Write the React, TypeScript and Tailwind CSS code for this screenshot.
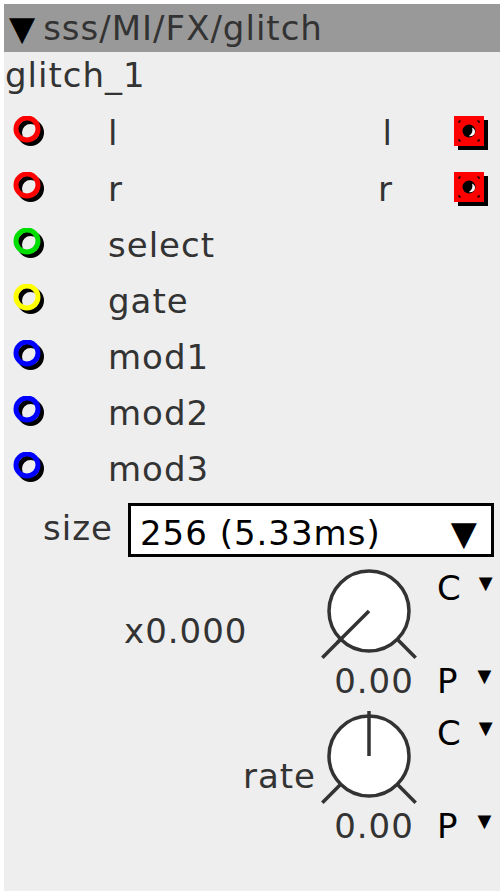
import React from 'react';

type Jack = { label: string; color: string; out?: string };

const inputs: Jack[] = [
  { label: 'l', color: '#ff0000', out: 'l' },
  { label: 'r', color: '#ff0000', out: 'r' },
  { label: 'select', color: '#00dd00' },
  { label: 'gate', color: '#ffff00' },
  { label: 'mod1', color: '#0000ff' },
  { label: 'mod2', color: '#0000ff' },
  { label: 'mod3', color: '#0000ff' },
];

const InJack = ({ color }: { color: string }) => (
  <svg width="34" height="34" viewBox="0 0 34 34">
    <circle cx="17.5" cy="16.5" r="11" fill="none" stroke="#000" strokeWidth="5" />
    <circle cx="14" cy="13" r="11" fill="none" stroke={color} strokeWidth="5" />
  </svg>
);

const OutJack = () => (
  <svg width="38" height="38" viewBox="0 0 38 38">
    <rect x="6" y="6" width="30" height="30" fill="#000" />
    <rect x="2" y="2" width="30" height="30" fill="#ff0000" />
    <circle cx="17" cy="17" r="6.5" fill="#000" />
    <path d="M20 13.5 A4.5 4.5 0 0 1 17 22 A7 7 0 0 0 20 13.5 Z" fill="#fff" />
    <path d="M7 9 V7 H9 M25 7 H27 V9 M7 25 V27 H9 M25 27 H27 V25" stroke="#000" strokeWidth="1.2" fill="none" />
  </svg>
);

const Knob = ({ angle }: { angle: number }) => {
  const rad = (a: number) => (a * Math.PI) / 180;
  const pt = (a: number, r: number) => [50 + r * Math.sin(rad(a)), 50 - r * Math.cos(rad(a))];
  const [t1x, t1y] = pt(-135, 40);
  const [t2x, t2y] = pt(-135, 66);
  const [t3x, t3y] = pt(135, 40);
  const [t4x, t4y] = pt(135, 66);
  const [ix, iy] = pt(angle, 45);
  return (
    <svg width="100" height="100" viewBox="0 0 100 100">
      <circle cx="50" cy="50" r="40" fill="#fff" stroke="#333" strokeWidth="3.5" />
      <line x1={t1x} y1={t1y} x2={t2x} y2={t2y} stroke="#333" strokeWidth="3.5" />
      <line x1={t3x} y1={t3y} x2={t4x} y2={t4y} stroke="#333" strokeWidth="3.5" />
      <line x1="50" y1="50" x2={ix} y2={iy} stroke="#333" strokeWidth="3.5" />
    </svg>
  );
};

const KnobRow = ({ label, labelPad, angle }: { label: string; labelPad: string; angle: number }) => (
  <div className="flex h-[140px]">
    <div className={`w-[314.5px] pt-[50px] text-right ${labelPad}`}>{label}</div>
    <div className="flex w-[100px] flex-col">
      <Knob angle={angle} />
      <div className="pl-[11px] text-center">0.00</div>
    </div>
    <div className="ml-[18.5px] flex flex-col justify-between pt-[7px] text-black">
      <div className="flex items-start">
        <span>C</span>
        <span className="ml-[17px] mt-[6px] text-[18px] leading-none">▼</span>
      </div>
      <div className="flex items-start">
        <span>P</span>
        <span className="ml-[19px] mt-[6px] text-[18px] leading-none">▼</span>
      </div>
    </div>
  </div>
);

export default function App() {
  return (
    <div className="min-h-screen bg-white pl-1 pt-1" style={{ fontFamily: '"DejaVu Sans", sans-serif' }}>
      <div className="h-[887px] w-[496px] bg-[#eeeeee] text-[34px] leading-[40px] tracking-[1px] text-[#333333]">
        <div className="flex h-[48px] items-center bg-[#999999] pl-[5px]">
          <span className="text-black">▼</span>
          <span className="ml-[7px]">sss/MI/FX/glitch</span>
        </div>
        <div className="h-[53px] pl-[1px] pt-[3px]">glitch_1</div>

        {inputs.map((j) => (
          <div key={j.label} className="flex h-[56px] items-center">
            <div className="ml-[9px]">
              <InJack color={j.color} />
            </div>
            <span className="ml-[61px]">{j.label}</span>
            {j.out && (
              <>
                <span className="ml-auto">{j.out}</span>
                <div className="ml-[59px] mr-[10px]">
                  <OutJack />
                </div>
              </>
            )}
          </div>
        ))}

        <div className="mt-[6px] flex items-start">
          <span className="pl-[39px] pt-[5px]">size</span>
          <div className="ml-[15px] flex h-[54px] w-[366px] items-start justify-between border-[3px] border-black bg-white pl-[9px] pr-[13px] pt-[7px] text-black">
            <span>256 (5.33ms)</span>
            <span>▼</span>
          </div>
        </div>

        <div className="mt-[4px]">
          <KnobRow label="x0.000" labelPad="pr-[71px]" angle={-135} />
        </div>
        <div className="mt-[5px]">
          <KnobRow label="rate" labelPad="pr-[2.5px]" angle={0} />
        </div>
      </div>
    </div>
  );
}
